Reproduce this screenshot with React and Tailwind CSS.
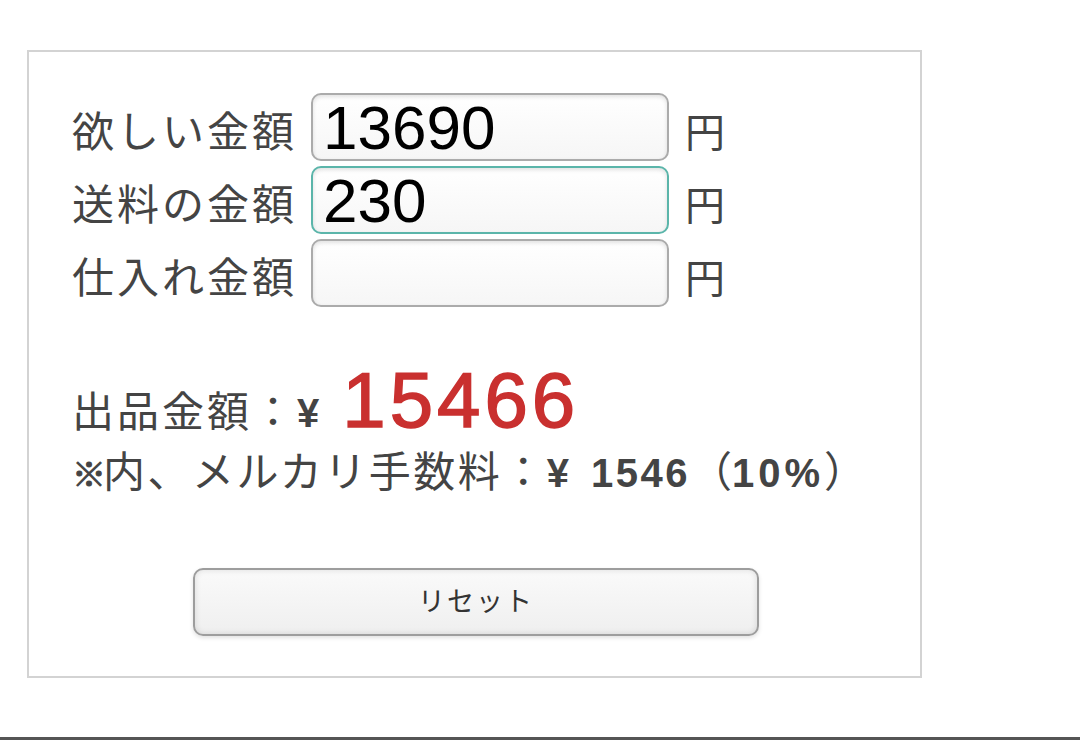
import React from 'react'

const font = { fontFamily: '"Liberation Sans", "Noto Sans CJK JP", sans-serif' }

const fields = [
  { label: '欲しい金額', value: '13690', focus: false },
  { label: '送料の金額', value: '230', focus: true },
  { label: '仕入れ金額', value: '', focus: false },
]

const Row = ({ label, value, focus }) => (
  <div className="flex items-center">
    <span className="w-[239px] mt-3 text-[42px] leading-none tracking-[3px] text-[#444]">{label}</span>
    <input
      defaultValue={value}
      className={
        'w-[358px] h-[68px] rounded-[10px] border-2 pl-[10px] pr-3 text-[62px] leading-none text-black bg-gradient-to-b from-white to-[#f6f6f6] shadow-[inset_0_2px_4px_rgba(0,0,0,0.12)] outline-none ' +
        (focus ? 'border-[#5bb5aa]' : 'border-[#ababab]')
      }
      style={font}
    />
    <span className="ml-4 mt-3 text-[40px] leading-none text-[#444]">円</span>
  </div>
)

export default function App() {
  return (
    <div className="h-[740px] flex flex-col bg-white" style={font}>
      <div className="flex-1 pt-[50px] pl-[27px]">
        <div className="w-[895px] h-[628px] border-2 border-[#d3d3d3] pt-[41px] pl-[43px] flex flex-col">
          <div className="flex flex-col gap-[5px]">
            {fields.map((f) => (
              <Row key={f.label} {...f} />
            ))}
          </div>

          <div className="mt-[54px] h-[78px] leading-none text-[#444] flex items-baseline whitespace-nowrap">
            <span className="text-[42px] tracking-[3px]">出品金額：</span>
            <span className="text-[40px] font-bold">¥</span>
            <span className="ml-[23px] text-[78px] tracking-[4px] text-[#c9302f] [-webkit-text-stroke:1.5px_#c9302f]">15466</span>
          </div>

          <div className="mt-[11px] h-[46px] leading-[46px] text-[#444] flex items-baseline whitespace-nowrap">
            <span className="w-[31px] text-[34px] font-bold [-webkit-text-stroke:1px_#444]">※</span>
            <span className="text-[42px] tracking-[2.5px]">内、メルカリ手数料：</span>
            <span className="text-[40px] font-bold">¥</span>
            <span className="ml-[22px] text-[40px] font-bold tracking-[2.5px]">1546</span>
            <span className="text-[42px]">（</span>
            <span className="text-[40px] font-bold tracking-[4px]">10%</span>
            <span className="text-[42px]">）</span>
          </div>

          <button className="mt-[72px] ml-[121px] w-[566px] h-[68px] rounded-[10px] border-2 border-[#9d9d9d] bg-gradient-to-b from-[#fafafa] to-[#efefef] shadow-[inset_0_0_6px_rgba(0,0,0,0.12),0_2px_4px_rgba(0,0,0,0.12)] text-[27px] tracking-[2px] text-[#333]">
            リセット
          </button>
        </div>
      </div>
      <div className="h-[3px] bg-[#555]" />
    </div>
  )
}
